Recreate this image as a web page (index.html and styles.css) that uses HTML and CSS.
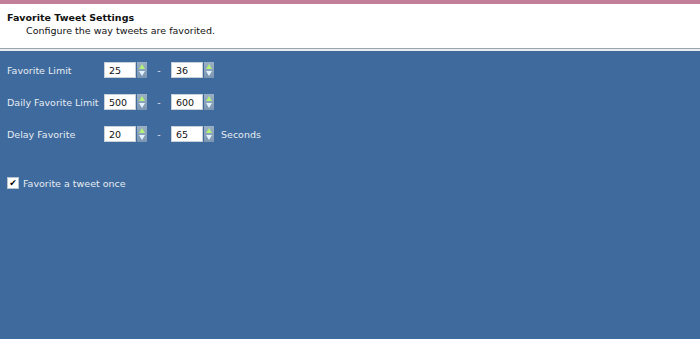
FILE: index.html
```html
<!DOCTYPE html>
<html lang="en">
<head>
  <meta charset="UTF-8" />
  <title>Favorite Tweet Settings</title>
  <link rel="stylesheet" href="styles.css">
</head>
<body>

  <!-- cabeçalho -->
  <div class="topbar"></div>
  <div class="header">
    <div class="header-title">Favorite Tweet Settings</div>
    <div class="header-sub">Configure the way tweets are favorited.</div>
  </div>
  <div class="header-line"></div>

  <!-- opções -->
  <div class="settings">
    <div class="row">
      <div class="label">Favorite Limit</div>
      <div class="spin"><input class="spin-input" value="25"><span class="spin-btn"><i class="up"></i><i class="down"></i></span></div>
      <span class="dash">-</span>
      <div class="spin"><input class="spin-input" value="36"><span class="spin-btn"><i class="up"></i><i class="down"></i></span></div>
    </div>
    <div class="row">
      <div class="label">Daily Favorite Limit</div>
      <div class="spin"><input class="spin-input" value="500"><span class="spin-btn"><i class="up"></i><i class="down"></i></span></div>
      <span class="dash">-</span>
      <div class="spin"><input class="spin-input" value="600"><span class="spin-btn"><i class="up"></i><i class="down"></i></span></div>
    </div>
    <div class="row">
      <div class="label">Delay Favorite</div>
      <div class="spin"><input class="spin-input" value="20"><span class="spin-btn"><i class="up"></i><i class="down"></i></span></div>
      <span class="dash">-</span>
      <div class="spin"><input class="spin-input" value="65"><span class="spin-btn"><i class="up"></i><i class="down"></i></span></div>
      <span class="unit">Seconds</span>
    </div>

    <label class="check">
      <span class="check-box">&#10004;</span>
      Favorite a tweet once
    </label>
  </div>

</body>
</html>
```

FILE: styles.css
```css
html, body {
  margin: 0;
  height: 100%;
}

body {
  font-family: "DejaVu Sans", Verdana, sans-serif;
  font-size: 9.5px;
  background-color: #3e6a9d;
  color: #e6ecf3;
}

.topbar {
  height: 4px;
  background-color: #c27f98;
}

.header {
  background-color: #fff;
  color: #111;
  padding: 8px 7px 0 7px;
  height: 36px;
}

.header-title {
  font-weight: bold;
}

.header-sub {
  padding-left: 19px;
  margin-top: 2px;
}

.header-line {
  height: 1px;
  background-color: #9aa5ae;
  border-bottom: 2px solid #e8ecef;
}

.settings {
  padding: 11px 7px 0 7px;
}

.row {
  display: flex;
  align-items: center;
  height: 16px;
  margin-bottom: 16px;
}

.label {
  width: 97px;
}

.spin {
  display: flex;
  height: 16px;
}

.spin-input {
  width: 32px;
  height: 16px;
  box-sizing: border-box;
  border: 1px solid #c8d0d8;
  padding: 0 0 0 4px;
  margin: 0;
  font-family: inherit;
  font-size: 9.5px;
  color: #111;
  background: #fff;
  outline: none;
}

.spin-btn {
  width: 10px;
  height: 16px;
  margin-left: 1px;
  background: linear-gradient(#9ab0c6, #7c95b0);
  display: flex;
  flex-direction: column;
  align-items: center;
  justify-content: center;
  gap: 2px;
}

.spin-btn i {
  width: 0;
  height: 0;
  border-left: 3px solid transparent;
  border-right: 3px solid transparent;
}

.spin-btn .up {
  border-bottom: 5px solid #b4f07a;
}

.spin-btn .down {
  border-top: 5px solid #e2f2ff;
}

.dash {
  width: 24px;
  text-align: center;
}

.unit {
  margin-left: 7px;
}

.check {
  display: flex;
  align-items: center;
  gap: 4px;
  margin-top: 35px;
}

.check-box {
  width: 10px;
  height: 10px;
  background: #fff;
  border: 1px solid #b8c4d0;
  color: #000;
  font-size: 9px;
  line-height: 10px;
  text-align: center;
  box-sizing: content-box;
}
```
